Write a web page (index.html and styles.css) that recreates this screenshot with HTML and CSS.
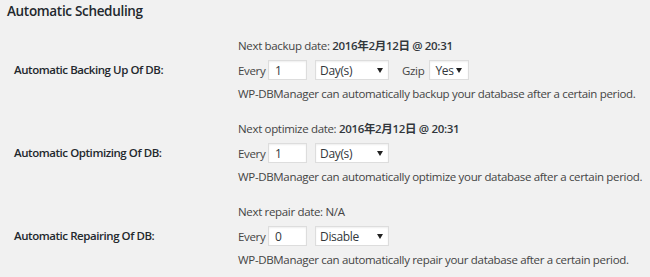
FILE: index.html
```html
<!DOCTYPE html>
<html>
<head>
<meta charset="utf-8">
<link rel="stylesheet" href="styles.css">
</head>
<body>
<div class="wrap">
  <h3 class="title">Automatic Scheduling</h3>
  <div class="form">
    <div class="row">
      <div class="label">Automatic Backing Up Of DB:</div>
      <div class="field">
        <div class="line">Next backup date: <strong>2016年2月12日 @ 20:31</strong></div>
        <div class="controls">
          <span class="every">Every</span>
          <span class="input">1</span>
          <span class="select wide">Day(s)<i class="arrow"></i></span>
          <span class="gzip">Gzip</span>
          <span class="select small">Yes<i class="arrow"></i></span>
        </div>
        <div class="line">WP-DBManager can automatically backup your database after a certain period.</div>
      </div>
    </div>
    <div class="row">
      <div class="label">Automatic Optimizing Of DB:</div>
      <div class="field">
        <div class="line">Next optimize date: <strong>2016年2月12日 @ 20:31</strong></div>
        <div class="controls">
          <span class="every">Every</span>
          <span class="input">1</span>
          <span class="select wide">Day(s)<i class="arrow"></i></span>
        </div>
        <div class="line">WP-DBManager can automatically optimize your database after a certain period.</div>
      </div>
    </div>
    <div class="row">
      <div class="label">Automatic Repairing Of DB:</div>
      <div class="field">
        <div class="line">Next repair date: N/A</div>
        <div class="controls">
          <span class="every">Every</span>
          <span class="input">0</span>
          <span class="select wide">Disable<i class="arrow"></i></span>
        </div>
        <div class="line">WP-DBManager can automatically repair your database after a certain period.</div>
      </div>
    </div>
  </div>
</div>
</body>
</html>
```

FILE: styles.css
```css
html, body {
  margin: 0;
  padding: 0;
  background: #f1f1f1;
}
body {
  font-family: "Open Sans", "Noto Sans CJK SC", sans-serif;
  font-size: 11.5px;
  letter-spacing: -0.33px;
  color: #444;
  width: 650px;
  height: 277px;
  overflow: hidden;
}
.wrap {
  padding-left: 7px;
}
.title {
  margin: 0;
  padding-top: 1px;
  font-size: 13.5px;
  letter-spacing: -0.32px;
  font-weight: 600;
  color: #23282d;
  line-height: 20px;
}
.form {
  padding-top: 7px;
}
.row {
  display: flex;
  align-items: center;
  height: 83px;
}
.label {
  flex: none;
  width: 231px;
  padding-left: 7px;
  box-sizing: border-box;
  font-size: 11.5px;
  letter-spacing: -0.44px;
  font-weight: 600;
  color: #23282d;
}
.field {
  display: flex;
  flex-direction: column;
}
.line {
  line-height: 17px;
  white-space: nowrap;
}
.line strong {
  font-weight: 600;
  color: #32373c;
}
.controls {
  display: flex;
  align-items: center;
  height: 20px;
  margin: 6px 0 5px;
}
.input, .select {
  display: flex;
  align-items: center;
  box-sizing: border-box;
  height: 20px;
  background: #fff;
  border: 1px solid #ddd;
  box-shadow: inset 0 1px 2px rgba(0,0,0,0.07);
  color: #32373c;
  font-size: 12px;
}
.every {
  width: 30px;
}
.input {
  width: 39px;
  padding-left: 6px;
}
.select {
  position: relative;
  margin-left: 8px;
  padding-left: 4px;
}
.select.wide {
  width: 74px;
}
.select.small {
  width: 40px;
  margin-left: 5px;
  padding-left: 5px;
}
.arrow {
  position: absolute;
  right: 5px;
  top: 7px;
  width: 0;
  height: 0;
  border-left: 3px solid transparent;
  border-right: 3px solid transparent;
  border-top: 5px solid #222;
}
.small .arrow {
  right: 6px;
}
.gzip {
  margin-left: 13px;
}
```
